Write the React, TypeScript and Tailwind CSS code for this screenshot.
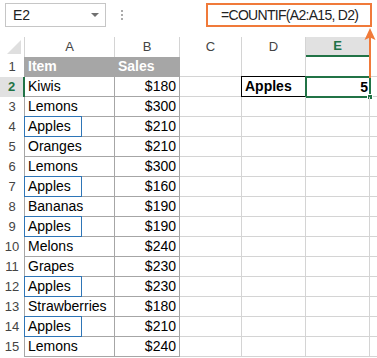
import React from 'react';

const rows: [string, string][] = [
  ['Kiwis', '$180'],
  ['Lemons', '$300'],
  ['Apples', '$210'],
  ['Oranges', '$210'],
  ['Lemons', '$300'],
  ['Apples', '$160'],
  ['Bananas', '$190'],
  ['Apples', '$190'],
  ['Melons', '$240'],
  ['Grapes', '$230'],
  ['Apples', '$230'],
  ['Strawberries', '$180'],
  ['Apples', '$210'],
  ['Lemons', '$240'],
];

const grid = 'border-r border-b border-[#d4d4d4]';
const tbl = 'border-r border-b border-[#a6a6a6]';

const App: React.FC = () => {
  return (
    <div className="relative w-[377px] h-[358px] overflow-hidden bg-white text-black font-['Liberation_Sans',Arial,sans-serif]">
      {/* name box + formula bar */}
      <div className="flex items-start h-[37px] pt-[3px]">
        <div className="ml-[5px] w-[101px] h-[24px] border border-[#c6c6c6] flex items-center pl-[7px] pr-[6px] text-[14px] text-[#222]">
          <span>E2</span>
          <span className="ml-auto w-0 h-0 border-l-[4px] border-r-[4px] border-t-[4px] border-l-transparent border-r-transparent border-t-[#707070]" />
        </div>
        <div className="ml-[15px] mt-[7px] flex flex-col gap-[2px]">
          <span className="w-[2px] h-[2px] bg-[#ababab]" />
          <span className="w-[2px] h-[2px] bg-[#ababab]" />
          <span className="w-[2px] h-[2px] bg-[#ababab]" />
        </div>
        <div className="ml-[83px] w-[166px] h-[24px] border-2 border-[#f07a3a] flex items-center pl-[13px] text-[14px] tracking-[-0.7px] text-[#222]">
          =COUNTIF(A2:A15, D2)
        </div>
      </div>

      {/* sheet */}
      <div className="grid grid-cols-[25px_90px_65px_62px_64px_64px_1fr] auto-rows-[20px] text-[14px]">
        {/* column headers */}
        <div className="border-r border-[#d4d4d4] flex items-end justify-end pr-[3px] pb-[3px]">
          <svg width="14" height="14" viewBox="0 0 14 14">
            <path d="M14 0 L14 14 L0 14 Z" fill="#dfdfdf" />
          </svg>
        </div>
        {['A', 'B', 'C', 'D'].map((c) => (
          <div key={c} className="border-r border-[#d4d4d4] flex items-center justify-center text-[13px] text-[#444]">
            {c}
          </div>
        ))}
        <div className="bg-[#e1e1e1] border-r border-b-2 border-r-[#d4d4d4] border-b-[#217346] flex items-center justify-center text-[13px] font-bold text-[#217346]">
          E
        </div>
        <div />

        {/* row 1 */}
        <div className="border-r border-[#a6a6a6] flex items-center justify-center text-[13px] text-[#444]">1</div>
        <div className={`${tbl} bg-[#a6a6a6] flex items-center pl-[3px] font-bold text-white`}>Item</div>
        <div className={`${tbl} bg-[#a6a6a6] flex items-center pl-[3px] font-bold text-white`}>Sales</div>
        <div className={grid} />
        <div className={grid} />
        <div className={grid} />
        <div className="border-b border-[#d4d4d4]" />

        {rows.map(([item, sales], i) => {
          const n = i + 2;
          const sel = n === 2;
          const apple = item === 'Apples';
          return (
            <React.Fragment key={n}>
              <div
                className={
                  sel
                    ? 'bg-[#e1e1e1] border-r-2 border-[#217346] flex items-center justify-center text-[13px] font-bold text-[#217346]'
                    : 'border-r border-[#a6a6a6] flex items-center justify-center text-[13px] text-[#444]'
                }
              >
                {n}
              </div>
              <div className={`${tbl} relative flex items-center pl-[3px]`}>
                {item}
                {apple && (
                  <span className="absolute -top-px -left-px w-[58px] h-[21px] border border-[#2e75b6]" />
                )}
              </div>
              <div className={`${tbl} flex items-center justify-end pr-[3px]`}>{sales}</div>
              <div className={grid} />
              <div className={`${grid} relative`}>
                {sel && (
                  <div className="absolute -top-px -left-px w-[65px] h-[21px] border border-black flex items-center pl-[3px] font-bold">
                    Apples
                  </div>
                )}
              </div>
              <div className={`${grid} relative`}>
                {sel && (
                  <div className="absolute -top-px -left-px w-[66px] h-[22px] border-2 border-[#217346] flex items-center justify-end pr-[1px] font-bold">
                    5
                    <span className="absolute -right-[4px] -bottom-[4px] w-[6px] h-[6px] bg-[#217346] border border-white" />
                  </div>
                )}
              </div>
              <div className="border-b border-[#d4d4d4]" />
            </React.Fragment>
          );
        })}
      </div>

      {/* arrow annotation */}
      <svg className="absolute left-[363px] top-[27px]" width="14" height="51" viewBox="0 0 14 51">
        <line x1="7" y1="8" x2="7" y2="51" stroke="#f07a3a" strokeWidth="2" />
        <path d="M7 1 L12.5 13 L7 10.5 L1.5 13 Z" fill="#f07a3a" />
      </svg>
    </div>
  );
};

export default App;
